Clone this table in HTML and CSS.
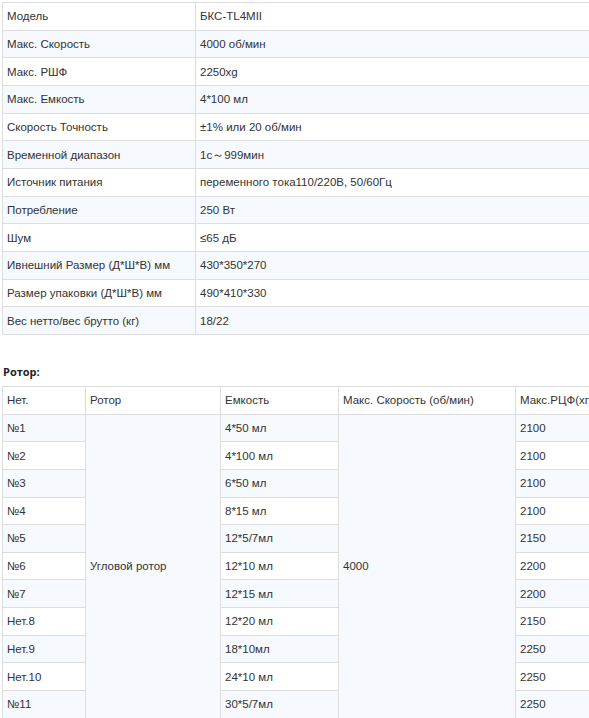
FILE: index.html
```html
<!DOCTYPE html>
<html lang="ru">
<head>
<meta charset="utf-8">
<link rel="stylesheet" href="styles.css">
</head>
<body>
<div class="page">
  <table class="spec">
    <colgroup><col class="c-name"><col class="c-val"></colgroup>
    <tr><td>Модель</td><td>БКС-TL4MII</td></tr>
    <tr><td>Макс. Скорость</td><td>4000 об/мин</td></tr>
    <tr><td>Макс. РШФ</td><td>2250xg</td></tr>
    <tr><td>Макс. Емкость</td><td>4*100 мл</td></tr>
    <tr><td>Скорость Точность</td><td>±1% или 20 об/мин</td></tr>
    <tr><td>Временной диапазон</td><td>1с～999мин</td></tr>
    <tr><td>Источник питания</td><td>переменного тока110/220В, 50/60Гц</td></tr>
    <tr><td>Потребление</td><td>250 Вт</td></tr>
    <tr><td>Шум</td><td>≤65 дБ</td></tr>
    <tr><td>Ивнешний Размер (Д*Ш*В) мм</td><td>430*350*270</td></tr>
    <tr><td>Размер упаковки (Д*Ш*В) мм</td><td>490*410*330</td></tr>
    <tr><td>Вес нетто/вес брутто (кг)</td><td>18/22</td></tr>
  </table>

  <p class="label">Ротор:</p>

  <table class="rotor">
    <colgroup><col class="r1"><col class="r2"><col class="r3"><col class="r4"><col class="r5"></colgroup>
    <tr><td>Нет.</td><td>Ротор</td><td>Емкость</td><td>Макс. Скорость (об/мин)</td><td>Макс.РЦФ(хг)</td></tr>
    <tr><td>№1</td><td rowspan="11">Угловой ротор</td><td>4*50 мл</td><td rowspan="11">4000</td><td>2100</td></tr>
    <tr><td>№2</td><td>4*100 мл</td><td>2100</td></tr>
    <tr><td>№3</td><td>6*50 мл</td><td>2100</td></tr>
    <tr><td>№4</td><td>8*15 мл</td><td>2100</td></tr>
    <tr><td>№5</td><td>12*5/7мл</td><td>2150</td></tr>
    <tr><td>№6</td><td>12*10 мл</td><td>2200</td></tr>
    <tr><td>№7</td><td>12*15 мл</td><td>2200</td></tr>
    <tr><td>Нет.8</td><td>12*20 мл</td><td>2150</td></tr>
    <tr><td>Нет.9</td><td>18*10мл</td><td>2250</td></tr>
    <tr><td>Нет.10</td><td>24*10 мл</td><td>2250</td></tr>
    <tr><td>№11</td><td>30*5/7мл</td><td>2250</td></tr>
  </table>
</div>
</body>
</html>
```

FILE: styles.css
```css
html, body {
  margin: 0;
  padding: 0;
  background: #ffffff;
  overflow: hidden;
}
.page {
  padding: 2px 0 0 2px;
  font-family: "Liberation Sans", Arial, sans-serif;
  font-size: 11.5px;
  color: #333333;
  width: 760px;
}
table {
  border-collapse: collapse;
  table-layout: fixed;
}
td {
  border: 1px solid #dddddd;
  padding: 0 0 0 4px;
  height: 26.67px;
  line-height: 16px;
  vertical-align: middle;
  white-space: nowrap;
  overflow: hidden;
}
tr {
  background: #ffffff;
}
tr:nth-child(even) {
  background: #f6f9fd;
}
.spec {
  width: 700px;
}
.spec .c-name { width: 193px; }
.spec .c-val { width: 507px; }
.label {
  margin: 29px 0 0 1px;
  height: 16px;
  line-height: 16px;
  font-family: "Open Sans", "Noto Sans", sans-serif;
  font-weight: 700;
  font-size: 11px;
  color: #222222;
}
.rotor {
  margin-top: 6px;
  width: 680px;
}
.rotor .r1 { width: 83px; }
.rotor .r2 { width: 135px; }
.rotor .r3 { width: 118px; }
.rotor .r4 { width: 177px; }
.rotor .r5 { width: 167px; }
```
